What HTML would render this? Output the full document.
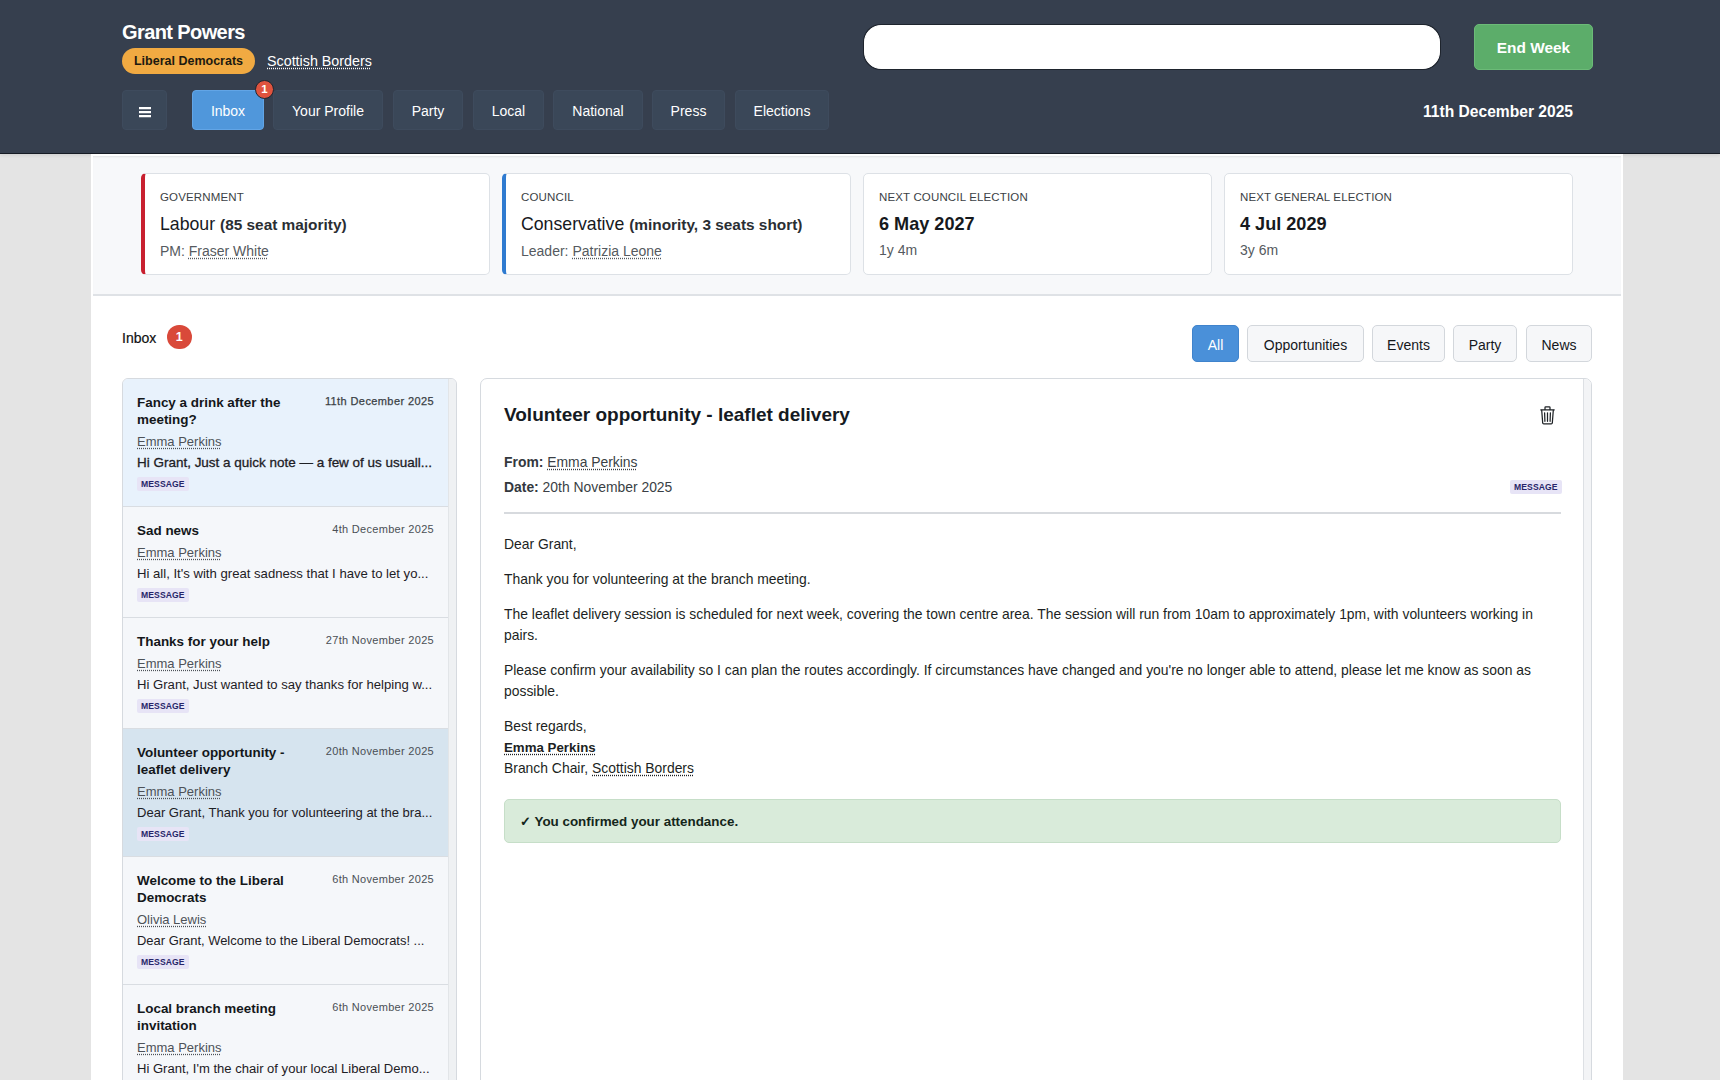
<!DOCTYPE html>
<html><head><meta charset="utf-8">
<style>
*{box-sizing:border-box;margin:0;padding:0}
html,body{width:1720px;height:1080px;overflow:hidden;background:#e4e4e4;font-family:"Liberation Sans",sans-serif;color:#1f2328}
.abs{position:absolute}
#hdr{position:absolute;left:0;top:0;width:1720px;height:154px;background:#363f4e;border-bottom:1px solid #161b24;box-shadow:0 2px 3px rgba(0,0,0,0.07)}
.name{position:absolute;left:122px;top:21px;font-size:20px;font-weight:bold;color:#fff;letter-spacing:-0.6px}
.pbadge{position:absolute;left:122px;top:48px;width:133px;height:26px;border-radius:13px;background:#f1aa42;color:#1d1a10;font-size:12.5px;font-weight:bold;text-align:center;line-height:26px}
.region{position:absolute;left:267px;top:53px;font-size:14.3px;color:#fff;text-decoration:underline dotted;text-underline-offset:2px}
.search{position:absolute;left:864px;top:25px;width:576px;height:44px;border-radius:17px;background:#fff;border:1px solid #fff;box-shadow:0 0 0 1px #1e242d}
.endw{position:absolute;left:1474px;top:24px;width:119px;height:46px;border-radius:5px;background:#5cad6a;border:1px solid #6cbb78;color:#fff;font-weight:bold;font-size:15.4px;text-align:center;line-height:46px}
.nav{position:absolute;top:90px;height:40px;border-radius:4px;background:#3a4758;border:1px solid #3e4b5d;color:#fff;font-size:14px;text-align:center;line-height:41px}
.nav.on{background:#5097db;border-color:#62a5e6}
.nbadge{position:absolute;left:255px;top:80px;width:19px;height:19px;border-radius:50%;background:#df533e;border:1.5px solid #20262f;color:#fff;font-size:11.5px;font-weight:bold;text-align:center;line-height:16px}
.hdate{position:absolute;left:1400px;width:173px;top:103px;text-align:right;font-size:15.6px;font-weight:bold;color:#fff}

#wrap{position:absolute;left:91px;top:154px;width:1532px;height:926px;background:#fff}
#info{position:absolute;left:2px;top:0;width:1528px;height:142px;background:#f7f8fa;border-top:2px solid #fff;border-bottom:2px solid #dfe2e6;box-shadow:inset 0 2px 2px -1px rgba(0,0,0,0.09)}
.card{position:absolute;top:17px;width:349px;height:102px;background:#fff;border:1px solid #dde1e6;border-radius:5px;padding:16px 0 0 15px}
.card.red{border-left:4px solid #c8202f}
.card.blue{border-left:4px solid #2f7bd0}
.clabel{font-size:11.5px;color:#3b3f45;letter-spacing:0.15px;line-height:14px}
.cmain{font-size:17.7px;color:#16191d;margin-top:9px;line-height:22px}
.cmain small{font-size:15.4px;font-weight:bold;color:#2a2e33}
.cmain b{font-weight:bold;font-size:18.1px}
.csub{font-size:14px;color:#555a60;margin-top:6px;line-height:18px}
.csub .u{text-underline-offset:1.5px}
.u{text-decoration:underline dotted;text-underline-offset:1.5px}

.ititle{position:absolute;left:31px;top:176px;font-size:14px;color:#111;-webkit-text-stroke:0.2px #111}
.ibadge{position:absolute;left:75.5px;top:171px;width:25.5px;height:23.5px;border-radius:12px;background:#d9493a;color:#fff;font-size:12.5px;font-weight:bold;text-align:center;line-height:24px}
.fbtn{position:absolute;top:171px;height:37px;border-radius:5px;background:#f6f7f9;border:1px solid #d3d7dc;color:#15181c;font-size:14px;text-align:center;line-height:39px}
.fbtn.on{background:#4a90d9;border-color:#3f83cc;color:#fff}
#list{position:absolute;left:31px;top:224px;width:335px;height:720px;border:1px solid #d6dadf;border-radius:6px;background:#f5f7fa;overflow:hidden}
#list .track{position:absolute;right:0;top:0;width:8px;height:100%;background:#eff1f3;border-left:1px solid #e2e5e8}
.hb{position:absolute;left:16px;width:12px;height:2px;background:#fff;box-shadow:0 0.5px 0 rgba(255,255,255,0.5)}
.item{position:relative;width:325px;padding:15px 14px 15px 14px;border-bottom:1px solid #d9dde2;background:#f5f7fa}
.item.new{background:#e8f2fc}
.item.new .d{letter-spacing:0.4px;-webkit-text-stroke:0.25px currentColor;color:#3a3f45}
.item.new .p{-webkit-text-stroke:0.3px currentColor}
.item.sel{background:#d6e4ef}
.item .t{font-size:13.45px;font-weight:bold;line-height:17px;color:#14171a;width:190px}
.item .d{position:absolute;right:14px;top:15px;font-size:11px;letter-spacing:0.3px;line-height:14px;color:#4a4f55}
.item .s{font-size:13px;line-height:20px;margin-top:4px;color:#4d5258}
.item .s .u{text-underline-offset:2px}
.item .p{font-size:13px;line-height:20px;margin-top:1px;color:#1d2025;white-space:nowrap}
.tag{display:inline-block;height:14px;padding:0 4px;background:#e7e4f6;border-radius:2px;color:#27266a;font-size:8.6px;font-weight:bold;letter-spacing:0.1px;line-height:14px;vertical-align:top}
.item .tag{margin-top:4px}
#detail{position:absolute;left:389px;top:224px;width:1112px;height:720px;border:1px solid #d6dadf;border-radius:7px;background:#fff;overflow:hidden}
#detail .track{position:absolute;right:0;top:0;width:8px;height:100%;background:#f3f4f6;border-left:1px solid #dde0e4}
.dtitle{position:absolute;left:23px;top:24px;font-size:19px;font-weight:bold;color:#151a22;line-height:23px}
.trash{position:absolute;left:1059px;top:27px}
.meta{position:absolute;left:23px;font-size:13.9px;color:#3a3f45;line-height:20px}
.meta b{color:#33383e}
.meta .u{text-underline-offset:1.5px}
.dtag{position:absolute;left:1029px;top:101px}
.hr{position:absolute;left:23px;top:133px;width:1057px;height:2px;background:#d7dade}
.body{position:absolute;left:23px;top:155px;width:1060px;font-size:13.9px;line-height:21px;color:#1c1f23}
.body p{margin-bottom:14px}
.confirm{position:absolute;left:23px;top:420px;width:1057px;height:44px;background:#d9ebda;border:1px solid #c6dec8;border-radius:5px;padding-left:15px;font-size:13.4px;font-weight:bold;color:#14261a;line-height:43px}
</style></head>
<body>
<div id="hdr">
  <div class="name">Grant Powers</div>
  <div class="pbadge">Liberal Democrats</div>
  <div class="region">Scottish Borders</div>
  <div class="search"></div>
  <div class="endw">End Week</div>
  <div class="nav" style="left:122px;width:45px"><div class="hb" style="top:16px"></div><div class="hb" style="top:20px"></div><div class="hb" style="top:24px"></div></div>
  <div class="nav on" style="left:192px;width:72px">Inbox</div>
  <div class="nbadge">1</div>
  <div class="nav" style="left:273px;width:110px">Your Profile</div>
  <div class="nav" style="left:393px;width:70px">Party</div>
  <div class="nav" style="left:473px;width:71px">Local</div>
  <div class="nav" style="left:553px;width:90px">National</div>
  <div class="nav" style="left:652px;width:73px">Press</div>
  <div class="nav" style="left:735px;width:94px">Elections</div>
  <div class="hdate">11th December 2025</div>
</div>
<div id="wrap">
  <div id="info">
    <div class="card red" style="left:48px">
      <div class="clabel">GOVERNMENT</div>
      <div class="cmain">Labour <small>(85 seat majority)</small></div>
      <div class="csub">PM: <span class="u">Fraser White</span></div>
    </div>
    <div class="card blue" style="left:409px">
      <div class="clabel">COUNCIL</div>
      <div class="cmain">Conservative <small>(minority, 3 seats short)</small></div>
      <div class="csub">Leader: <span class="u">Patrizia Leone</span></div>
    </div>
    <div class="card" style="left:770px">
      <div class="clabel">NEXT COUNCIL ELECTION</div>
      <div class="cmain"><b>6 May 2027</b></div>
      <div class="csub">1y 4m</div>
    </div>
    <div class="card" style="left:1131px">
      <div class="clabel">NEXT GENERAL ELECTION</div>
      <div class="cmain"><b>4 Jul 2029</b></div>
      <div class="csub">3y 6m</div>
    </div>
  </div>

  <div class="ititle">Inbox</div>
  <div class="ibadge">1</div>
  <div class="fbtn on" style="left:1101px;width:47px">All</div>
  <div class="fbtn" style="left:1156px;width:117px">Opportunities</div>
  <div class="fbtn" style="left:1281px;width:73px">Events</div>
  <div class="fbtn" style="left:1362px;width:64px">Party</div>
  <div class="fbtn" style="left:1435px;width:66px">News</div>
  <div id="list"><div class="track"></div>
<div class="item new"><div class="t">Fancy a drink after the<br>meeting?</div><div class="d">11th December 2025</div><div class="s"><span class="u">Emma Perkins</span></div><div class="p" style="font-size:13.48px">Hi Grant, Just a quick note — a few of us usuall...</div><div><span class="tag">MESSAGE</span></div></div>
<div class="item "><div class="t">Sad news</div><div class="d">4th December 2025</div><div class="s"><span class="u">Emma Perkins</span></div><div class="p" style="font-size:13.13px">Hi all, It's with great sadness that I have to let yo...</div><div><span class="tag">MESSAGE</span></div></div>
<div class="item "><div class="t">Thanks for your help</div><div class="d">27th November 2025</div><div class="s"><span class="u">Emma Perkins</span></div><div class="p" style="font-size:13.12px">Hi Grant, Just wanted to say thanks for helping w...</div><div><span class="tag">MESSAGE</span></div></div>
<div class="item sel"><div class="t">Volunteer opportunity -<br>leaflet delivery</div><div class="d">20th November 2025</div><div class="s"><span class="u">Emma Perkins</span></div><div class="p" style="font-size:13.04px">Dear Grant, Thank you for volunteering at the bra...</div><div><span class="tag">MESSAGE</span></div></div>
<div class="item "><div class="t">Welcome to the Liberal<br>Democrats</div><div class="d">6th November 2025</div><div class="s"><span class="u">Olivia Lewis</span></div><div class="p" style="font-size:12.95px">Dear Grant, Welcome to the Liberal Democrats! ...</div><div><span class="tag">MESSAGE</span></div></div>
<div class="item "><div class="t">Local branch meeting<br>invitation</div><div class="d">6th November 2025</div><div class="s"><span class="u">Emma Perkins</span></div><div class="p" style="font-size:13.05px">Hi Grant, I'm the chair of your local Liberal Demo...</div><div><span class="tag">MESSAGE</span></div></div>
  </div>
  <div id="detail"><div class="track"></div>
    <div class="dtitle">Volunteer opportunity - leaflet delivery</div>
    <svg class="trash" width="15" height="19" viewBox="0 0 15 19" fill="none" stroke="#1e2226" stroke-width="1.25" stroke-linecap="round" stroke-linejoin="round"><path d="M5 3.6 V1.6 Q5 0.9 5.7 0.9 H9.3 Q10 0.9 10 1.6 V3.6"/><path d="M0.8 3.9 H14.2"/><path d="M1.7 4.3 L2.7 17 Q2.8 17.9 3.7 17.9 H11.3 Q12.2 17.9 12.3 17 L13.3 4.3"/><path d="M4.6 6.8 L4.9 15.3 M7.5 6.8 V15.3 M10.4 6.8 L10.1 15.3"/></svg>
    <div class="meta" style="top:73px"><b>From:</b> <span class="u">Emma Perkins</span></div>
    <div class="meta" style="top:97.5px"><b>Date:</b> 20th November 2025</div>
    <div class="dtag"><span class="tag">MESSAGE</span></div>
    <div class="hr"></div>
    <div class="body">
      <p>Dear Grant,</p>
      <p>Thank you for volunteering at the branch meeting.</p>
      <p>The leaflet delivery session is scheduled for next week, covering the town centre area. The session will run from 10am to approximately 1pm, with volunteers working in pairs.</p>
      <p>Please confirm your availability so I can plan the routes accordingly. If circumstances have changed and you're no longer able to attend, please let me know as soon as possible.</p>
      <p>Best regards,<br><b class="u" style="font-weight:bold;font-size:13.3px">Emma Perkins</b><br>Branch Chair, <span class="u">Scottish Borders</span></p>
    </div>
    <div class="confirm">&#10003; You confirmed your attendance.</div>
  </div>
</div>
</body></html>
